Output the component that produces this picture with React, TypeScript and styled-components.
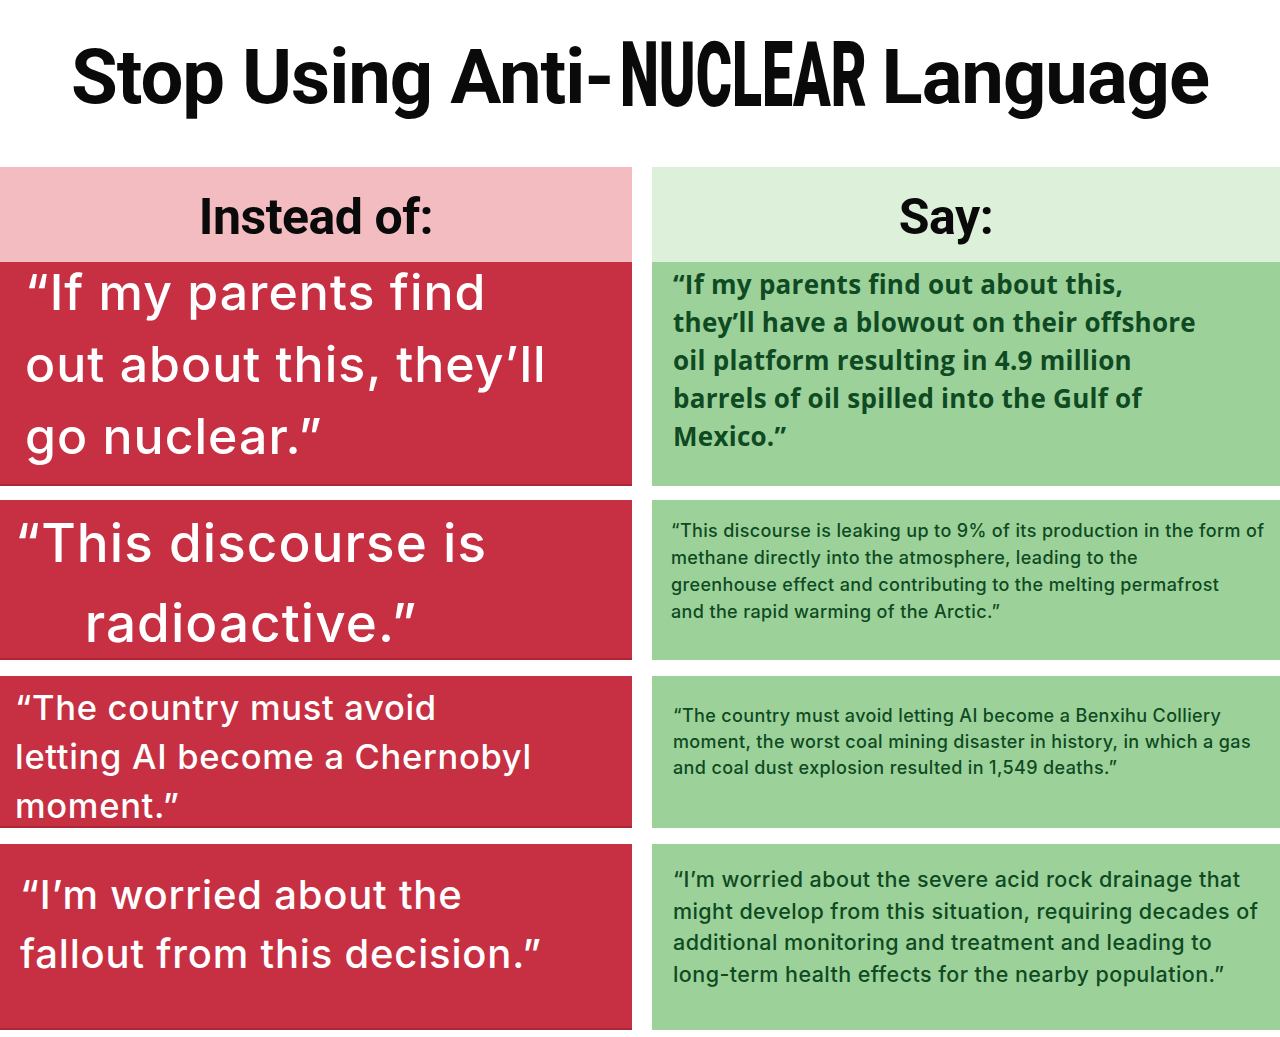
import React from "react";
import styled, { createGlobalStyle } from "styled-components";

const GlobalStyle = createGlobalStyle`
  html, body { margin: 0; padding: 0; background: #ffffff; }
  #root { width: 1280px; }
`;

const Page = styled.div`
  width: 1280px;
  height: 1037px;
  background: #ffffff;
  overflow: hidden;
  display: flex;
  flex-direction: column;
`;

const TitleBar = styled.h1`
  margin: 0;
  height: 167px;
  box-sizing: border-box;
  padding-top: 38px;
  text-align: center;
  font-family: Roboto, "Liberation Sans", sans-serif;
  font-weight: 700;
  font-size: 76px;
  line-height: 76px;
  color: #0a0a0a;
  white-space: nowrap;
  letter-spacing: -1px;
`;

const Condensed = styled.span`
  display: inline-block;
  font-family: Roboto, "Liberation Sans", sans-serif;
  font-weight: 900;
  font-size: 90px;
  letter-spacing: 0;
  transform: scaleX(0.615);
  transform-origin: left center;
  vertical-align: -3px;
  margin-left: 7px;
  margin-right: -158px;
`;

const Row = styled.div<{ $h: number; $top: number }>`
  display: grid;
  grid-template-columns: 632px 628px;
  column-gap: 20px;
  height: ${(p) => p.$h}px;
  margin-top: ${(p) => p.$top}px;
`;

const HeadCell = styled.div<{ $bg: string; $padRight?: number }>`
  background: ${(p) => p.$bg};
  display: flex;
  justify-content: center;
  box-sizing: border-box;
  padding-top: 25px;
  padding-right: ${(p) => p.$padRight ?? 0}px;
  font-family: Roboto, "Liberation Sans", sans-serif;
  font-weight: 700;
  font-size: 50px;
  line-height: 50px;
  color: #0a0a0a;
  letter-spacing: -0.5px;
`;

const BadCell = styled.div<{ $padTop: number; $padLeft: number }>`
  background: #c72f42;
  box-shadow: inset 0 -2px 0 rgba(90, 10, 20, 0.25);
  box-sizing: border-box;
  padding-top: ${(p) => p.$padTop}px;
  padding-left: ${(p) => p.$padLeft}px;
  overflow: hidden;
`;

const GoodCell = styled.div<{ $padTop: number; $padLeft: number }>`
  background: #9cd29a;
  box-sizing: border-box;
  padding-top: ${(p) => p.$padTop}px;
  padding-left: ${(p) => p.$padLeft}px;
  overflow: hidden;
`;

const BadQuote = styled.p<{ $size: number; $lh: number; $shift?: number; $center?: boolean }>`
  display: inline-block;
  margin: ${(p) => p.$shift ?? 0}px 0 0 0;
  font-family: Inter, "Open Sans", sans-serif;
  font-weight: 500;
  font-size: ${(p) => p.$size}px;
  line-height: ${(p) => p.$lh}px;
  color: #ffffff;
  white-space: pre;
  text-align: ${(p) => (p.$center ? "center" : "left")};
  letter-spacing: 0.02em;
`;

const GoodQuote = styled.p<{ $size: number; $lh: number; $bold?: boolean }>`
  margin: 0;
  font-family: ${(p) => (p.$bold ? '"Open Sans", Lato, sans-serif' : 'Inter, "Open Sans", sans-serif')};
  font-weight: ${(p) => (p.$bold ? 700 : 500)};
  font-size: ${(p) => p.$size}px;
  line-height: ${(p) => p.$lh}px;
  color: #0f4a22;
  white-space: pre;
  letter-spacing: ${(p) => (p.$bold ? "0.01em" : "0.02em")};
`;

export default function App() {
  return (
    <Page>
      <GlobalStyle />
      <TitleBar>
        Stop Using Anti-<Condensed>NUCLEAR</Condensed> Language
      </TitleBar>

      <Row $h={95} $top={0}>
        <HeadCell $bg="#f3bcc1">Instead of:</HeadCell>
        <HeadCell $bg="#ddf0d9" $padRight={40}>Say:</HeadCell>
      </Row>

      <Row $h={224} $top={0}>
        <BadCell $padTop={0} $padLeft={25}>
          <BadQuote $size={50} $lh={72} $shift={-6}>
            {"“If my parents find\nout about this, they’ll\ngo nuclear.”"}
          </BadQuote>
        </BadCell>
        <GoodCell $padTop={3} $padLeft={21}>
          <GoodQuote $size={26} $lh={38} $bold>
            {"“If my parents find out about this,\nthey’ll have a blowout on their offshore\noil platform resulting in 4.9 million\nbarrels of oil spilled into the Gulf of\nMexico.”"}
          </GoodQuote>
        </GoodCell>
      </Row>

      <Row $h={160} $top={14}>
        <BadCell $padTop={3} $padLeft={15}>
          <BadQuote $size={53} $lh={80} $center>
            {"“This discourse is\nradioactive.”"}
          </BadQuote>
        </BadCell>
        <GoodCell $padTop={17} $padLeft={19}>
          <GoodQuote $size={18} $lh={27}>
            {"“This discourse is leaking up to 9% of its production in the form of\nmethane directly into the atmosphere, leading to the\ngreenhouse effect and contributing to the melting permafrost\nand the rapid warming of the Arctic.”"}
          </GoodQuote>
        </GoodCell>
      </Row>

      <Row $h={152} $top={16}>
        <BadCell $padTop={7} $padLeft={15}>
          <BadQuote $size={34.5} $lh={49}>
            {"“The country must avoid\nletting AI become a Chernobyl\nmoment.”"}
          </BadQuote>
        </BadCell>
        <GoodCell $padTop={27} $padLeft={21}>
          <GoodQuote $size={18} $lh={26}>
            {"“The country must avoid letting AI become a Benxihu Colliery\nmoment, the worst coal mining disaster in history, in which a gas\nand coal dust explosion resulted in 1,549 deaths.”"}
          </GoodQuote>
        </GoodCell>
      </Row>

      <Row $h={186} $top={16}>
        <BadCell $padTop={21} $padLeft={20}>
          <BadQuote $size={40} $lh={59}>
            {"“I’m worried about the\nfallout from this decision.”"}
          </BadQuote>
        </BadCell>
        <GoodCell $padTop={20} $padLeft={21}>
          <GoodQuote $size={21.5} $lh={31.5}>
            {"“I’m worried about the severe acid rock drainage that\nmight develop from this situation, requiring decades of\nadditional monitoring and treatment and leading to\nlong-term health effects for the nearby population.”"}
          </GoodQuote>
        </GoodCell>
      </Row>
    </Page>
  );
}
